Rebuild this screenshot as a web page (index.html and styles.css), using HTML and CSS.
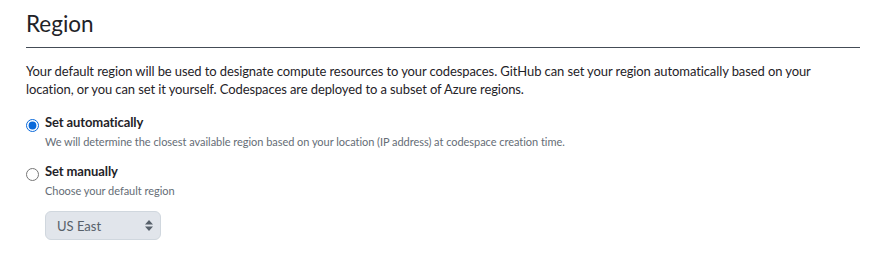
FILE: index.html
```html
<!DOCTYPE html>
<html lang="en">
<head>
    <meta charset="UTF-8">
    <title>Region</title>
    <link rel="stylesheet" href="styles.css">
</head>
<body>
    <div class="settings">
        <div class="subhead">
            <h2>Region</h2>
        </div>
        <p class="intro">Your default region will be used to designate compute resources to your codespaces. GitHub can set your region automatically based on your location, or you can set it yourself. Codespaces are deployed to a subset of Azure regions.</p>

        <div class="option">
            <input type="radio" name="region" id="regionAuto" checked>
            <div class="option-body">
                <label for="regionAuto">Set automatically</label>
                <div class="note">We will determine the closest available region based on your location (IP address) at codespace creation time.</div>
            </div>
        </div>

        <div class="option">
            <input type="radio" name="region" id="regionManual">
            <div class="option-body">
                <label for="regionManual">Set manually</label>
                <div class="note">Choose your default region</div>
                <div class="select-box">
                    <span>US East</span>
                    <svg width="8" height="11" viewBox="0 0 8 11"><path d="M4 0 L8 4.5 H0 Z M4 11 L0 6.5 H8 Z" fill="#57606a"/></svg>
                </div>
            </div>
        </div>
    </div>
</body>
</html>
```

FILE: styles.css
```css
body {
    margin: 0;
    background-color: #ffffff;
    font-family: "Segoe UI", Lato, sans-serif;
    color: #1f2328;
}
.settings {
    padding: 8px 13px 0 26px;
}
.subhead {
    border-bottom: 1px solid #444c56;
    padding-bottom: 7px;
}
.subhead h2 {
    margin: 0;
    font-size: 22.5px;
    font-weight: 400;
    line-height: 32px;
}
.intro {
    margin: 14px 0 14px;
    font-size: 13px;
    line-height: 18px;
    letter-spacing: -0.1px;
}
.option {
    display: flex;
    align-items: flex-start;
    margin-bottom: 10px;
}
.option input[type="radio"] {
    margin: 7px 6px 0 0;
    width: 13px;
    height: 13px;
    accent-color: #0969da;
}
.option label {
    display: block;
    font-size: 13px;
    font-weight: 700;
    line-height: 21px;
    letter-spacing: -0.1px;
}
.note {
    font-size: 11px;
    line-height: 18px;
    letter-spacing: -0.04px;
    color: #656d76;
}
.select-box {
    display: flex;
    align-items: center;
    justify-content: space-between;
    box-sizing: border-box;
    width: 116px;
    height: 29px;
    margin-top: 11px;
    padding: 0 7px 0 11px;
    background-color: #e1e5eb;
    border: 1px solid #d0d7de;
    border-radius: 6px;
    font-size: 13px;
    color: #57606a;
}
```
